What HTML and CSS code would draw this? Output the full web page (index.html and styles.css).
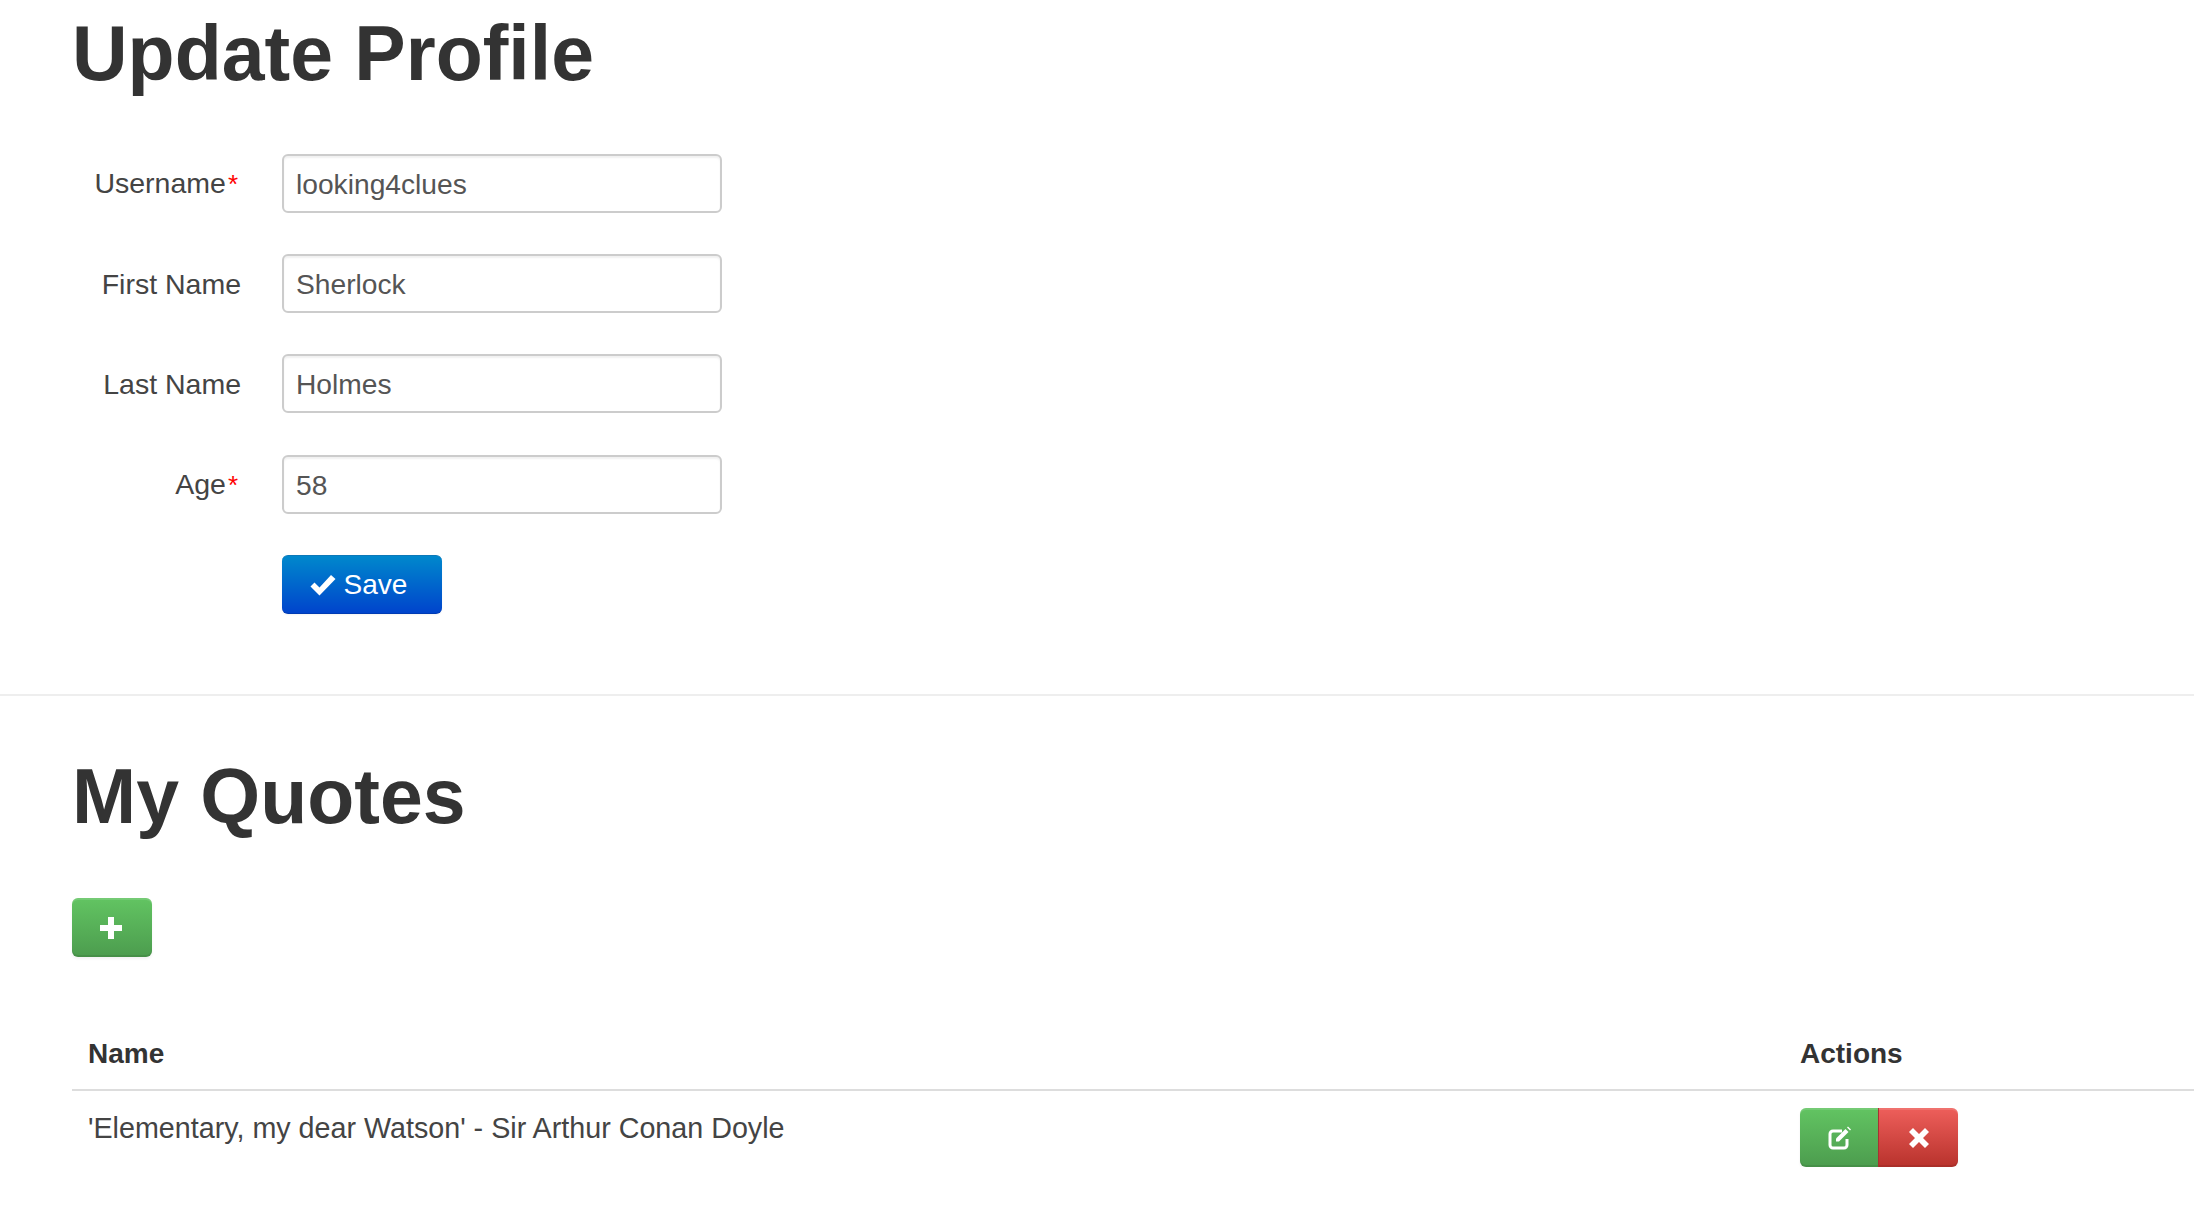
FILE: index.html
```html
<!DOCTYPE html>
<html lang="en">
<head>
<meta charset="utf-8">
<title>Update Profile</title>
<link rel="stylesheet" href="styles.css">
</head>
<body>
<section class="section profile">
  <h1 class="title">Update Profile</h1>
  <form class="form">
    <label class="label" for="u">Username<span class="req">*</span></label>
    <input class="input" id="u" type="text" value="looking4clues">
    <label class="label plain" for="f">First Name</label>
    <input class="input" id="f" type="text" value="Sherlock">
    <label class="label plain" for="l">Last Name</label>
    <input class="input" id="l" type="text" value="Holmes">
    <label class="label" for="a">Age<span class="req">*</span></label>
    <input class="input" id="a" type="text" value="58">
    <button class="btn btn-blue btn-save" type="button">
      <svg class="icon-check" viewBox="0 0 26 22" aria-hidden="true"><path d="M0.5 12.5 L4.5 8.5 L9.5 13.5 L21 1 L25.5 5 L9.5 21.5 Z" fill="#fff"/></svg>
      <span>Save</span>
    </button>
  </form>
</section>
<hr class="divider">
<section class="section quotes">
  <h1 class="title">My Quotes</h1>
  <button class="btn btn-green btn-add" type="button" aria-label="Add">
    <svg class="icon-plus" viewBox="0 0 22 22" aria-hidden="true"><path d="M8 0h6v8h8v6h-8v8H8v-8H0V8h8z" fill="#fff"/></svg>
  </button>
  <table class="table">
    <thead>
      <tr><th class="col-name">Name</th><th class="col-actions">Actions</th></tr>
    </thead>
    <tbody>
      <tr>
        <td class="quote-cell">'Elementary, my dear Watson' - Sir Arthur Conan Doyle</td>
        <td class="actions-cell">
          <div class="btn-group">
            <button class="btn btn-green btn-edit" type="button" aria-label="Edit">
              <svg class="icon-edit" viewBox="0 0 24 24" aria-hidden="true"><path d="M15 5H6a3 3 0 0 0-3 3v11a3 3 0 0 0 3 3h11a3 3 0 0 0 3-3v-6" fill="none" stroke="#fff" stroke-width="3"/><path d="M9 15.5v-3L18.5 3l3 3L12 15.5z" fill="#fff"/><path d="M20 1.5l1-1 3 3-1 1z" fill="#fff"/></svg>
            </button>
            <button class="btn btn-red btn-del" type="button" aria-label="Delete">
              <svg class="icon-x" viewBox="0 0 20 20" aria-hidden="true"><path d="M4 0l6 6 6-6 4 4-6 6 6 6-4 4-6-6-6 6-4-4 6-6-6-6z" fill="#fff"/></svg>
            </button>
          </div>
        </td>
      </tr>
    </tbody>
  </table>
</section>
</body>
</html>
```

FILE: styles.css
```css
html, body { margin: 0; padding: 0; background: #fff; overflow: hidden; }
body {
  font-family: "Liberation Sans", Arial, sans-serif;
  font-size: 28px;
  color: #333;
}
.section { padding-left: 72px; }
.title {
  margin: 0;
  font-size: 77px;
  line-height: 84px;
  font-weight: 700;
  color: #333;
}
.profile { padding-top: 11px; }
.form {
  margin-top: 58px;
  display: grid;
  grid-template-columns: 169px 440px;
  column-gap: 41px;
  row-gap: 41px;
  align-items: center;
}
.label { text-align: right; line-height: 57px; padding-top: 2px; color: #444; font-size: 28.5px; }
.req { color: #f00; font-size: 26px; margin-left: 2px; margin-right: 3px; }
.input {
  box-sizing: border-box;
  width: 440px;
  height: 59px;
  padding: 2px 12px 0;
  border: 2px solid #ccc;
  border-radius: 6px;
  font: inherit;
  font-size: 28.2px;
  color: #555;
  background: #fff;
  box-shadow: inset 0 2px 2px rgba(0,0,0,.06);
  outline: none;
}
.btn {
  box-sizing: border-box;
  display: inline-flex;
  align-items: center;
  justify-content: center;
  height: 59px;
  padding: 0;
  border: 0;
  border-radius: 6px;
  font: inherit;
  color: #fff;
  cursor: pointer;
}
.btn-blue {
  background: linear-gradient(#0088cc, #0044cc);
  border-top: 1px solid #0d78b8;
  border-bottom: 1px solid #003bb3;
  box-shadow: 0 1px 2px rgba(0,0,0,.05);
}
.btn-green {
  background: linear-gradient(#62c462, #4c9c4e);
  box-shadow: inset 0 2px 0 rgba(255,255,255,.12), inset 0 -2px 0 rgba(0,0,0,.08), 0 2px 3px rgba(0,0,0,.05);
}
.btn-red {
  background: linear-gradient(#ee5f5b, #b8322c);
  box-shadow: inset 0 2px 0 rgba(255,255,255,.12), inset 0 -2px 0 rgba(0,0,0,.08), 0 2px 3px rgba(0,0,0,.05);
}
.btn-save {
  grid-column: 2;
  justify-self: start;
  width: 160px;
  gap: 8px;
  padding-right: 7px;
}
.icon-check { width: 26px; height: 22px; }
.divider {
  height: 2px;
  margin: 80px 0 0;
  border: 0;
  background: #eee;
}
.quotes { padding-top: 58px; }
.btn-add { display: flex; width: 80px; margin-top: 60px; padding-right: 2px; }
.icon-plus { width: 22px; height: 22px; }
.table {
  width: 2122px;
  margin-top: 58px;
  border-collapse: collapse;
  table-layout: fixed;
  line-height: 40px;
}
.table th, .table td { padding: 0 16px; text-align: left; vertical-align: top; }
.table th { font-weight: 700; height: 75px; border-bottom: 2px solid #ddd; padding-top: 19px; box-sizing: border-box; color: #333; }
.table td { padding-top: 17px; }
.table .col-actions { padding-left: 17px; }
.col-name { width: 1711px; }
.quote-cell { font-size: 28.7px; color: #444; }
.table .actions-cell { padding-top: 17px; padding-left: 17px; }
.btn-group { display: flex; width: 158px; }
.btn-edit { width: 79px; border-radius: 6px 0 0 6px; border-right: 1px solid #a33; }
.btn-del { width: 79px; border-radius: 0 6px 6px 0; }
.icon-edit { width: 24px; height: 24px; }
.icon-x { width: 20px; height: 20px; }
```
